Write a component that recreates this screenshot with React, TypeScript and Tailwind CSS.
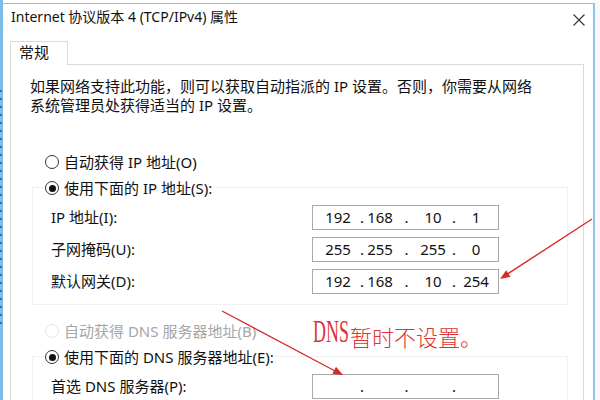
import React from "react";

const FONT = { fontFamily: '"Noto Sans", "Noto Sans CJK SC", sans-serif' };

function Radio({ checked, disabled }: { checked?: boolean; disabled?: boolean }) {
  return (
    <span
      className={`inline-flex w-[14px] h-[14px] rounded-full border items-center justify-center bg-white shrink-0 ${
        disabled ? "border-[#e6e6e6]" : "border-[#333333]"
      }`}
    >
      {checked ? <span className="w-[7px] h-[7px] rounded-full bg-[#111111]" /> : null}
    </span>
  );
}

function IpBox({ parts }: { parts: string[] }) {
  const widths = ["w-[42px]", "w-[30px]", "w-[30px]", "w-[32px]"];
  const dots = ["w-[6px]", "w-[23px]", "w-[12px]"];
  return (
    <div className="w-[187px] h-[25px] border border-[#a9a9a9] bg-white flex items-center pl-[4px] text-[15px] text-[#111]">
      {parts.map((p, i) => (
        <React.Fragment key={i}>
          <span className={`${widths[i]} text-center`}>{p}</span>
          {i < 3 ? <span className={`${dots[i]} text-center`}>.</span> : null}
        </React.Fragment>
      ))}
    </div>
  );
}

function FieldRow({ label, parts }: { label: string; parts: string[] }) {
  return (
    <div className="flex items-center h-[25px]">
      <span className="w-[261px] shrink-0">{label}</span>
      <IpBox parts={parts} />
    </div>
  );
}

export default function App() {
  return (
    <div className="w-[600px] h-[400px] overflow-hidden relative bg-white flex text-[#111]" style={FONT}>
      {/* left background strip */}
      <div className="w-[3px] h-full bg-[#7dbbe8] flex flex-col gap-[6px] pt-[90px]">
        {Array.from({ length: 30 }).map((_, i) => (
          <span key={i} className="w-[2px] h-[2px] bg-[#3a6f96]" />
        ))}
      </div>

      {/* dialog */}
      <div className="w-[592px] h-full pt-[3px] flex flex-col">
        <div className="flex-1 flex flex-col border-t border-r-2 border-[#8cc4ec] bg-white">
          {/* title bar */}
          <div className="h-[36px] flex items-start justify-between pt-[3px] pl-[8px] pr-[8px] shrink-0">
            <span className="text-[14px] leading-[20px]">Internet 协议版本 4 (TCP/IPv4) 属性</span>
            <svg width="12" height="12" viewBox="0 0 12 12" className="mt-[7px]">
              <path d="M0.5 0.5 L11.5 11.5 M11.5 0.5 L0.5 11.5" stroke="#333" strokeWidth="1.1" />
            </svg>
          </div>

          {/* tab */}
          <div className="pl-[7px] flex shrink-0">
            <div className="w-[58px] h-[24px] border-t border-l border-r border-[#dadada] bg-white pl-[8px] text-[15px] leading-[20px] relative top-[1px]">
              常规
            </div>
          </div>

          {/* panel */}
          <div className="ml-[7px] w-[574px] flex-1 border border-[#dadada] pt-[12px] text-[15px]">
            <p className="pl-[19px] leading-[19px]">
              如果网络支持此功能，则可以获取自动指派的 IP 设置。否则，你需要从网络
              <br />
              系统管理员处获得适当的 IP 设置。
            </p>

            <div className="mt-[35px] h-[24px] flex items-center pl-[34px] gap-[5px]">
              <Radio />
              <span>自动获得 IP 地址(O)</span>
            </div>

            {/* group 1 */}
            <div className="mt-[13px] ml-[21px] w-[536px] border border-[#f1f1f1] pb-[10px]">
              <div className="-mt-[12px] h-[24px] flex items-center pl-[12px]">
                <span className="flex items-center gap-[5px] bg-white pr-[2px]">
                  <Radio checked />
                  <span>使用下面的 IP 地址(S):</span>
                </span>
              </div>
              <div className="mt-[5px] pl-[18px] flex flex-col gap-[7px]">
                <FieldRow label="IP 地址(I):" parts={["192", "168", "10", "1"]} />
                <FieldRow label="子网掩码(U):" parts={["255", "255", "255", "0"]} />
                <FieldRow label="默认网关(D):" parts={["192", "168", "10", "254"]} />
              </div>
            </div>

            <div className="mt-[14px] h-[24px] flex items-center pl-[34px] gap-[5px] text-[#a6a6a6]">
              <Radio disabled />
              <span>自动获得 DNS 服务器地址(B)</span>
            </div>

            {/* group 2 */}
            <div className="mt-[13px] ml-[21px] w-[536px] border border-[#f1f1f1] pb-[10px]">
              <div className="-mt-[12px] h-[24px] flex items-center pl-[12px]">
                <span className="flex items-center gap-[5px] bg-white pr-[2px]">
                  <Radio checked />
                  <span>使用下面的 DNS 服务器地址(E):</span>
                </span>
              </div>
              <div className="mt-[5px] pl-[18px] flex flex-col gap-[7px]">
                <FieldRow label="首选 DNS 服务器(P):" parts={["", "", "", ""]} />
              </div>
            </div>
          </div>
        </div>
      </div>

      {/* right background */}
      <div className="flex-1 h-full bg-[#f9f9f9]" />

      {/* annotation text */}
      <div className="absolute left-[313px] top-[314px] text-[#dd3333] leading-[34px] flex items-end">
        <span className="w-[37px] shrink-0 overflow-visible whitespace-nowrap">
          <span
            className="inline-block text-[32px] origin-left scale-x-[0.56]"
            style={{ fontFamily: '"Liberation Serif", serif' }}
          >
            DNS
          </span>
        </span>
        <span className="text-[22px] font-light" style={{ fontFamily: '"Noto Sans CJK SC", sans-serif' }}>
          暂时不设置。
        </span>
      </div>

      {/* arrows */}
      <svg className="absolute left-0 top-0 pointer-events-none" width="600" height="400" viewBox="0 0 600 400">
        <line x1="592" y1="219" x2="506" y2="275" stroke="#d62b2b" strokeWidth="1.4" />
        <polygon points="500,279 510.6,276.9 506.2,270.2" fill="#d62b2b" />
        <line x1="222" y1="311" x2="337" y2="372" stroke="#d62b2b" strokeWidth="1.4" />
        <polygon points="343,375 332.3,373.9 336,366.8" fill="#d62b2b" />
      </svg>
    </div>
  );
}
